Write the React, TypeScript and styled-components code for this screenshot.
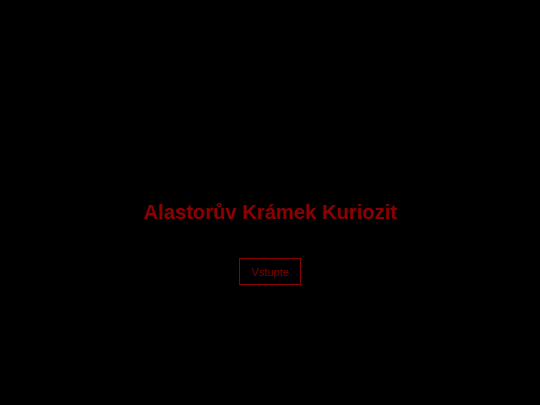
import React from "react";
import styled, { createGlobalStyle } from "styled-components";

const GlobalStyle = createGlobalStyle`
  html, body {
    margin: 0;
    padding: 0;
    background: #000000;
  }
  body {
    font-family: "Liberation Sans", Arial, sans-serif;
  }
`;

const Page = styled.main`
  box-sizing: border-box;
  width: 100%;
  height: 405px;
  padding-top: 200px;
  display: flex;
  flex-direction: column;
  align-items: center;
  background: #000000;
`;

const Title = styled.h1`
  margin: 0;
  font-size: 20.2px;
  line-height: 24px;
  font-weight: bold;
  color: #8b0000;
`;

const EnterButton = styled.button`
  margin-top: 34px;
  box-sizing: border-box;
  width: 62px;
  height: 27px;
  padding: 0;
  border: 1px solid #8b0000;
  background: transparent;
  color: #7a0000;
  font-family: "Liberation Sans", Arial, sans-serif;
  font-size: 11px;
  cursor: pointer;
`;

export default function App() {
  return (
    <>
      <GlobalStyle />
      <Page>
        <Title>Alastorův Krámek Kuriozit</Title>
        <EnterButton>Vstupte</EnterButton>
      </Page>
    </>
  );
}
